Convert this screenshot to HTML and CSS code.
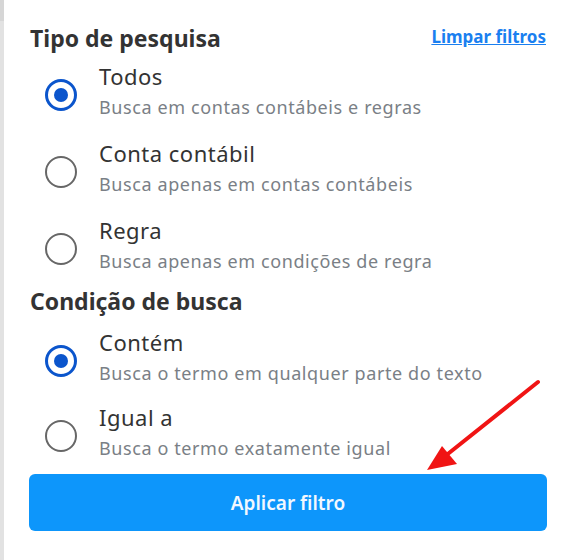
FILE: index.html
```html
<!DOCTYPE html>
<html lang="pt-BR">
<head>
    <meta charset="UTF-8">
    <meta name="viewport" content="width=device-width, initial-scale=1.0">
    <title>Filtros de pesquisa</title>
    <link rel="stylesheet" href="styles.css">
</head>
<body>
    <div class="panel">
        <div class="section-head">
            <h2>Tipo de pesquisa</h2>
            <a href="#" class="clear-link">Limpar filtros</a>
        </div>

        <label class="option">
            <input type="radio" name="tipo" checked>
            <span class="radio"></span>
            <span class="option-text">
                <span class="option-title">Todos</span>
                <span class="option-desc">Busca em contas contábeis e regras</span>
            </span>
        </label>
        <label class="option">
            <input type="radio" name="tipo">
            <span class="radio"></span>
            <span class="option-text">
                <span class="option-title">Conta contábil</span>
                <span class="option-desc">Busca apenas em contas contábeis</span>
            </span>
        </label>
        <label class="option">
            <input type="radio" name="tipo">
            <span class="radio"></span>
            <span class="option-text">
                <span class="option-title">Regra</span>
                <span class="option-desc">Busca apenas em condições de regra</span>
            </span>
        </label>

        <div class="section-head second">
            <h2>Condição de busca</h2>
        </div>

        <label class="option tight">
            <input type="radio" name="condicao" checked>
            <span class="radio"></span>
            <span class="option-text">
                <span class="option-title">Contém</span>
                <span class="option-desc">Busca o termo em qualquer parte do texto</span>
            </span>
        </label>
        <label class="option last">
            <input type="radio" name="condicao">
            <span class="radio"></span>
            <span class="option-text">
                <span class="option-title">Igual a</span>
                <span class="option-desc">Busca o termo exatamente igual</span>
            </span>
        </label>

        <button class="apply">Aplicar filtro</button>

        <!-- seta de destaque -->
        <svg class="arrow" width="571" height="560" viewBox="0 0 571 560">
            <line x1="538" y1="382" x2="444" y2="457" stroke="#f01414" stroke-width="4" stroke-linecap="round"/>
            <polygon points="427,470 442,446 457,464" fill="#f01414"/>
        </svg>
    </div>
</body>
</html>
```

FILE: styles.css
```css
* {
    margin: 0;
    padding: 0;
    box-sizing: border-box;
}

body {
    font-family: 'Noto Sans', 'Open Sans', sans-serif;
    background-color: #ffffff;
    color: #333;
}

.panel {
    position: relative;
    min-height: 560px;
    padding: 23px 24px 0 26px;
    border-left: 4px solid #e2e2e2;
}

.panel::before {
    content: "";
    position: absolute;
    left: -4px;
    top: 0;
    width: 4px;
    height: 21px;
    background-color: #d6d6d6;
}

.section-head {
    display: flex;
    justify-content: space-between;
    align-items: center;
    height: 30px;
    margin-bottom: 8px;
}

/* margem negativa soma com a margem de 15px da opcao anterior */
.section-head.second {
    margin-top: -6px;
    margin-bottom: 11px;
}

h2 {
    font-size: 23px;
    font-weight: 700;
    color: #333;
}

.clear-link {
    font-size: 17px;
    font-weight: 700;
    color: #1a7ff0;
    text-decoration: underline;
    margin-top: -4px;
    margin-right: 1px;
}

.option {
    display: flex;
    align-items: center;
    padding-left: 15px;
    margin-bottom: 15px;
    cursor: pointer;
}

.option.tight {
    margin-bottom: 13px;
}

.option.last {
    margin-bottom: 10px;
}

.option input {
    display: none;
}

.radio {
    width: 32px;
    height: 32px;
    border: 2px solid #676767;
    border-radius: 50%;
    flex-shrink: 0;
    margin-top: 6px;
    margin-right: 22px;
    display: flex;
    justify-content: center;
    align-items: center;
}

.option input:checked + .radio {
    border: 3px solid #0b55cc;
}

.option input:checked + .radio::after {
    content: "";
    width: 14px;
    height: 14px;
    border-radius: 50%;
    background-color: #0b55cc;
}

.option-text {
    display: flex;
    flex-direction: column;
}

.option-title {
    font-size: 22px;
    line-height: 30px;
    letter-spacing: 0.5px;
    color: #333;
}

.option-desc {
    font-size: 18px;
    line-height: 32px;
    letter-spacing: 0.6px;
    color: #7a7f86;
}

.apply {
    width: 518px;
    height: 57px;
    margin-left: -1px;
    background-color: #0d96fb;
    color: #f2f8ff;
    border: none;
    border-radius: 6px;
    font-family: inherit;
    font-size: 19px;
    font-weight: 600;
    cursor: pointer;
}

.arrow {
    position: absolute;
    left: -4px;
    top: 0;
    pointer-events: none;
}
```
